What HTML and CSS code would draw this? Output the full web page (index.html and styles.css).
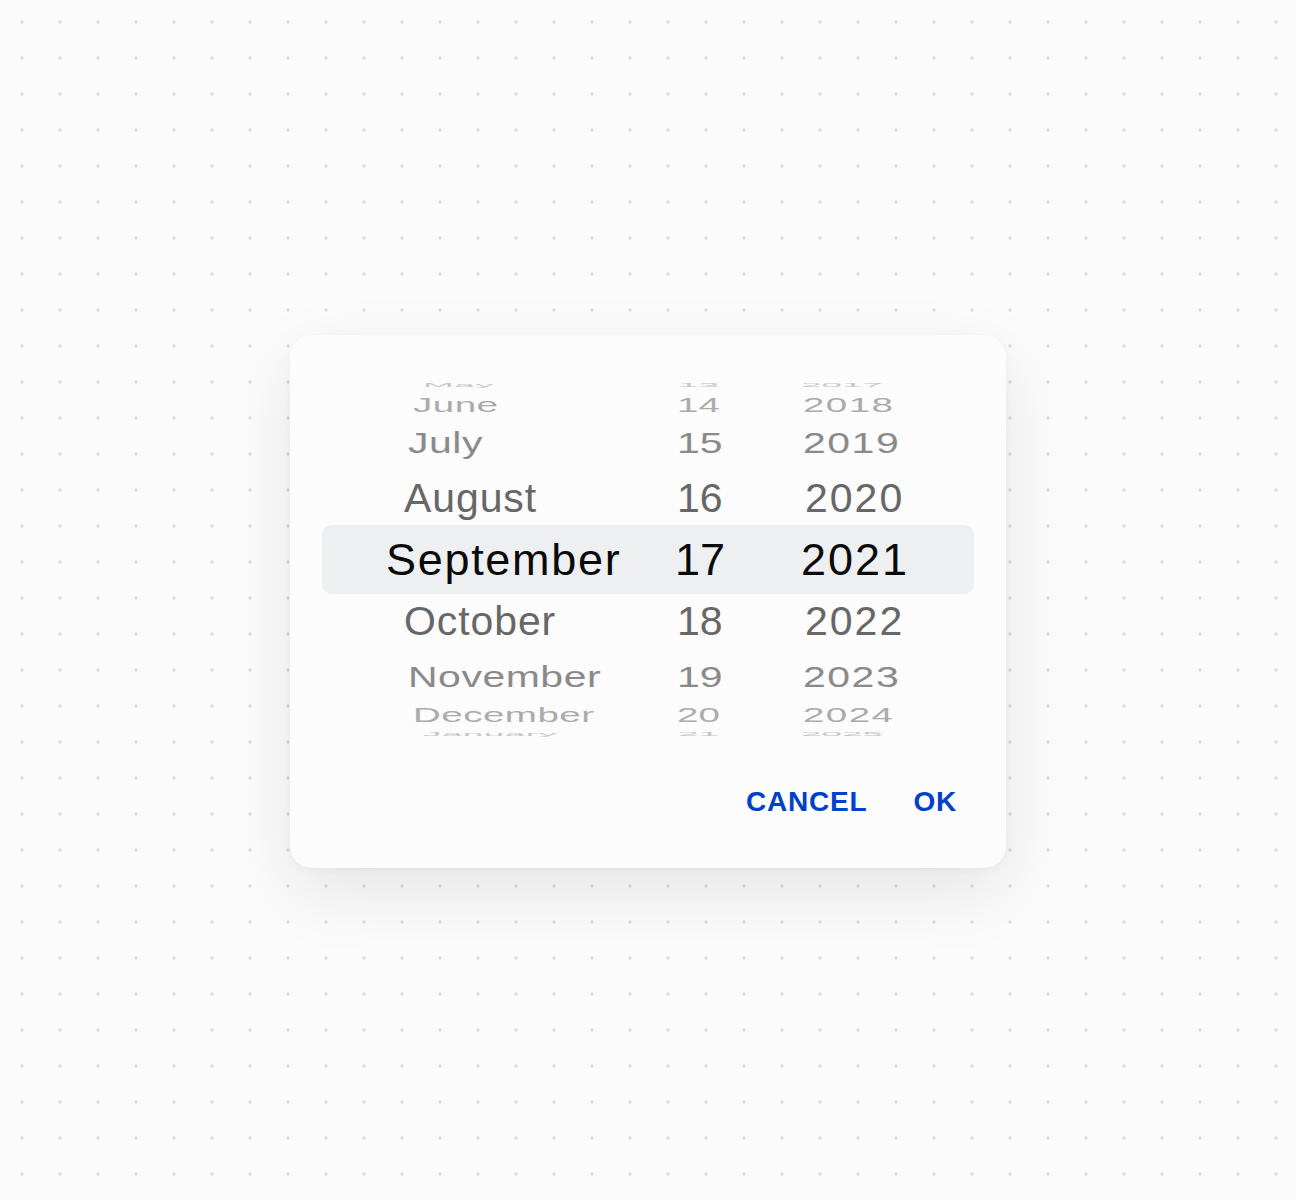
FILE: index.html
```html
<!DOCTYPE html>
<html lang="en">
<head>
    <meta charset="UTF-8">
    <meta name="viewport" content="width=device-width, initial-scale=1.0">
    <title>Date Picker</title>
    <link rel="stylesheet" href="styles.css">
</head>
<body>
    <div class="dialog">
        <!-- wheel: rows get flatter the further they are from the selected one -->
        <div class="wheel">
            <div class="row far4"><span class="month">May</span><span class="day">13</span><span class="year">2017</span></div>
            <div class="row far3"><span class="month">June</span><span class="day">14</span><span class="year">2018</span></div>
            <div class="row far2"><span class="month">July</span><span class="day">15</span><span class="year">2019</span></div>
            <div class="row far1"><span class="month">August</span><span class="day">16</span><span class="year">2020</span></div>
            <div class="row current"><span class="month">September</span><span class="day">17</span><span class="year">2021</span></div>
            <div class="row far1"><span class="month">October</span><span class="day">18</span><span class="year">2022</span></div>
            <div class="row far2"><span class="month">November</span><span class="day">19</span><span class="year">2023</span></div>
            <div class="row far3"><span class="month">December</span><span class="day">20</span><span class="year">2024</span></div>
            <div class="row far4"><span class="month">January</span><span class="day">21</span><span class="year">2025</span></div>
        </div>

        <div class="actions">
            <button class="action">CANCEL</button>
            <button class="action">OK</button>
        </div>
    </div>
</body>
</html>
```

FILE: styles.css
```css
body {
    margin: 0;
    height: 1200px;
    display: flex;
    align-items: center;
    justify-content: center;
    font-family: "Liberation Sans", Arial, sans-serif;
    background-color: #fbfbfb;
    background-image: radial-gradient(circle, #dcdcdc 0 1.3px, transparent 1.9px);
    background-size: 38px 36px;
    background-position: 3px 4px;
}
.dialog {
    width: 716px;
    box-sizing: border-box;
    margin-top: 3px;
    padding: 44px 32px 50px;
    background-color: #fcfcfc;
    border-radius: 22px;
    box-shadow: 0 24px 70px rgba(0, 0, 0, 0.09), 0 2px 10px rgba(0, 0, 0, 0.03);
}
.wheel {
    width: 652px;
}
.row {
    display: grid;
    grid-template-columns: 353px 126px 1fr;
    font-size: 41px;
    white-space: nowrap;
}
.row span {
    display: block;
    transform-origin: left center;
}
.month {
    letter-spacing: 0.5px;
}
.year {
    letter-spacing: 1.5px;
}
.current {
    height: 69px;
    line-height: 69px;
    margin: -4px 0 -3px;
    font-size: 45px;
    color: #0a0a0a;
    background-color: #eeeff1;
    border-radius: 10px;
}
.current .month {
    margin-left: 64px;
    letter-spacing: 1.7px;
}
.current .year {
    letter-spacing: 2px;
}
.far1 {
    height: 61px;
    line-height: 61px;
    color: #676767;
}
.far1 .month {
    margin-left: 82px;
    letter-spacing: 0.9px;
}
.far1 .day {
    margin-left: 2px;
}
.far1 .year {
    margin-left: 4px;
    letter-spacing: 2px;
}
.far2 {
    height: 50px;
    line-height: 50px;
    color: #8a8a8a;
}
.far2 span {
    transform: scaleY(0.73);
}
.far2 .month {
    margin-left: 86px;
}
.far2 .day {
    margin-left: 2px;
}
.far2 .year {
    margin-left: 2px;
}
.far3 {
    height: 26px;
    line-height: 26px;
    color: #ababab;
}
.far3 span {
    transform: scale(0.94, 0.48);
}
.far3 .month {
    margin-left: 91px;
}
.far3 .day {
    margin-left: 2px;
}
.far3 .year {
    margin-left: 2px;
}
.far4 {
    height: 13px;
    line-height: 13px;
    color: #c6c6c6;
}
.far4 span {
    transform: scale(0.9, 0.13);
}
.far4 .month {
    margin-left: 101px;
}
.far4 .day {
    margin-left: 3px;
}
.far4 .year {
    letter-spacing: 0;
}
.actions {
    display: flex;
    justify-content: flex-end;
    gap: 46px;
    margin-top: 45px;
    padding-right: 17px;
}
.action {
    padding: 0;
    border: none;
    background: none;
    font-family: "Liberation Sans", Arial, sans-serif;
    font-size: 28px;
    font-weight: bold;
    line-height: 32px;
    letter-spacing: 0.8px;
    color: #0041cc;
    cursor: pointer;
}
```
